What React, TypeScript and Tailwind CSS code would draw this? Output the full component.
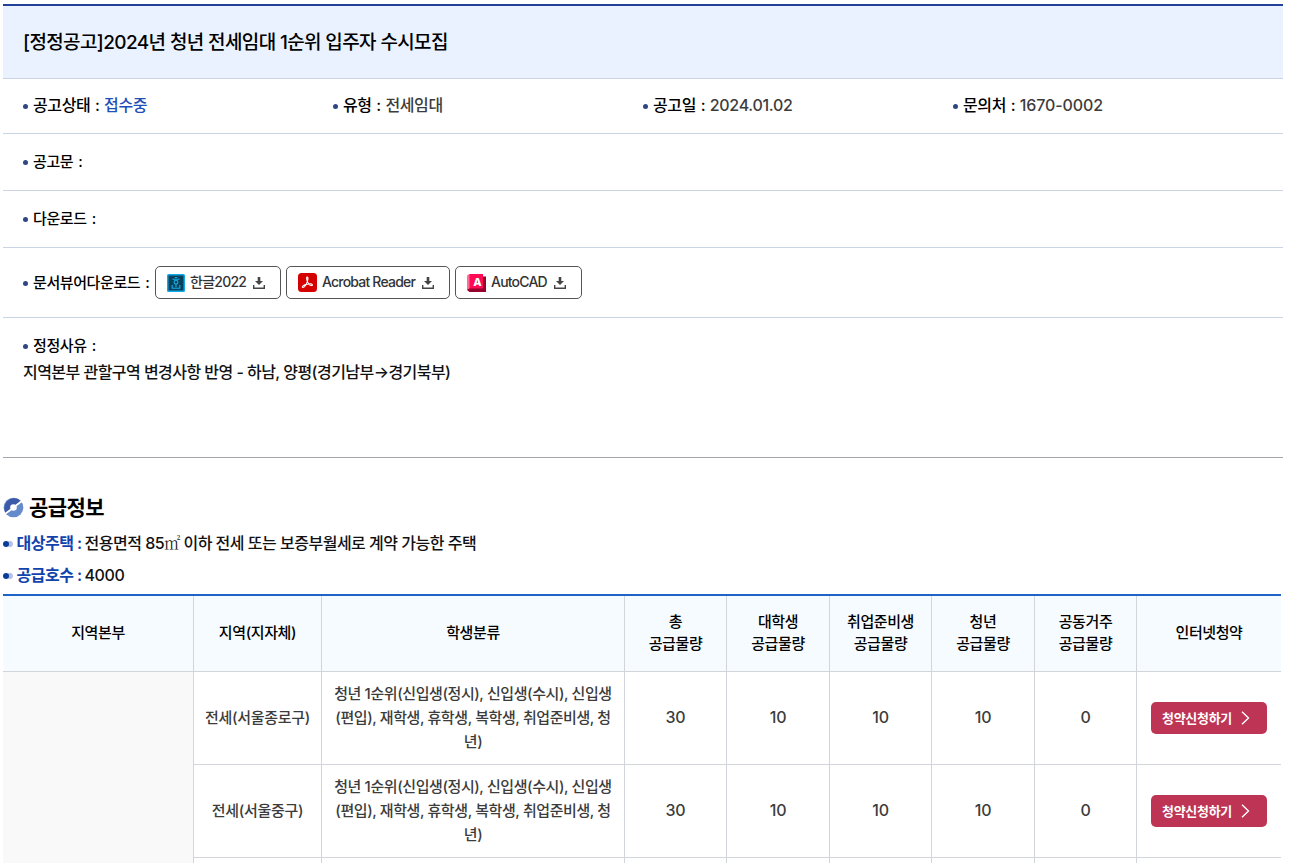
import type { ReactNode } from "react"

const regions = [
  { name: "전세(서울종로구)", counts: [30, 10, 10, 10, 0] },
  { name: "전세(서울중구)", counts: [30, 10, 10, 10, 0] },
]

const studentTypes = [
  "청년 1순위(신입생(정시), 신입생(수시), 신입생",
  "(편입), 재학생, 휴학생, 복학생, 취업준비생, 청",
  "년)",
]

const supplyHeads = ["총", "대학생", "취업준비생", "청년", "공동거주"]

const Label = ({ children, small }: { children: ReactNode; small?: boolean }) => (
  <span
    className={`flex items-center whitespace-pre font-medium tracking-[-0.4px] text-black ${
      small ? "text-[15px] leading-6 [word-spacing:1.5px]" : "[word-spacing:0.8px]"
    }`}
  >
    <i
      className={`mr-[5px] size-[5px] rounded-full bg-[#2f4684] ${small ? "mt-px" : "mt-[3px]"}`}
    />
    {children}
  </span>
)

const DownloadIcon = () => (
  <svg width="12" height="12" viewBox="0 0 12 12" className="ml-[7px]">
    <path d="M4.700 0h2.600v4h2.700L6 8 2 4h2.700z" fill="#444" />
    <path d="M.7 8v3.200h10.600V8" fill="none" stroke="#444" strokeWidth="1.400" />
  </svg>
)

const HangulIcon = () => (
  <svg width="18" height="18" viewBox="0 0 18 18">
    <rect width="18" height="18" rx="1.5" fill="#10a9ea" />
    <rect x="1.5" y="1.5" width="15" height="15" fill="#0b4259" />
    <g fill="none" stroke="#12b0ee" strokeWidth="1.1">
      <path d="M8 3.5h2M5.5 5.3h7M9 10.2v3M5.2 11v3.3h7.6V11" />
      <circle cx="9" cy="8.2" r="1.9" />
    </g>
  </svg>
)

const AcrobatIcon = () => (
  <svg width="19" height="19" viewBox="0 0 19 19">
    <rect width="19" height="19" rx="3.5" fill="#d50000" />
    <path
      d="M9.1 4c1.3 0 1 2.6.2 4.6-.9 2.3-2.7 5.9-4.2 5.9-1.8 0-.4-2.1 2.5-2.9 2.4-.7 6.2-1.1 6.8.1.4 1.1-1.8 1.3-3.4-.3C9.3 9.8 7.8 4 9.1 4z"
      fill="none"
      stroke="#fff"
      strokeWidth="1.1"
    />
  </svg>
)

const AutocadIcon = () => (
  <svg width="19" height="18" viewBox="0 0 19 18">
    <path d="M0 2l2.5-2H16v15l-2 1H0z" fill="#ff0a55" />
    <path d="M0 2l2.5-2v14.5L0 16z" fill="#ff6c98" />
    <path d="M16 2.5h3V18H2.5L0 16l2.5-1.5H16z" fill="#98002d" />
    <text
      x="10"
      y="11.5"
      textAnchor="middle"
      fontSize="11"
      fontWeight="800"
      fill="#fff"
      fontFamily="Inter, sans-serif"
    >
      A
    </text>
  </svg>
)

const ViewerButton = ({
  icon,
  label,
  className,
}: {
  icon: ReactNode
  label: string
  className: string
}) => (
  <button
    className={`flex h-[33px] items-center rounded-[5px] border border-[#555] pl-[11px] text-sm leading-5 font-medium text-[#333] ${className}`}
  >
    {icon}
    <span className="ml-[5px] pb-0.5 whitespace-nowrap">{label}</span>
    <DownloadIcon />
  </button>
)

const Bullets = () => (
  <svg width="10" height="6" viewBox="0 0 10 6" className="mt-0.5 mr-[3.5px]">
    <circle cx="7" cy="3" r="2.9" fill="#b5bfe6" />
    <circle cx="3" cy="3" r="3" fill="#0c3c9a" />
  </svg>
)

const ApplyButton = () => (
  <button className="mx-auto flex h-8 w-[116px] items-center rounded-[5px] bg-[#bd3454] pl-[11px] text-[13px] font-semibold tracking-[-0.3px] text-white">
    청약신청하기
    <svg
      width="9"
      height="14"
      viewBox="0 0 9 14"
      className="ml-[9px]"
      fill="none"
      stroke="#fff"
      strokeWidth="1.4"
    >
      <path d="M1 .8l6.5 6.2L1 13.2" />
    </svg>
  </button>
)

const th =
  "border-b border-[#d2d6da] bg-[#f6fbff] pb-px font-medium text-[15px] leading-[22px] tracking-[-0.4px] text-black"
const td = "border-b border-[#d2d6da]"

const App = () => {
  return (
    <div className="h-[863px] overflow-hidden bg-white pt-1 pl-[3px] font-[Inter,'Noto_Sans_CJK_KR',sans-serif] text-base leading-6 font-medium text-[#3c3c3c]">
      <section className="w-[1280px] border-t-2 border-[#22429a]">
        <h1 className="flex h-[73px] items-center border-b border-[#c9d4e5] bg-[#eaf2ff] pt-0.5 pl-5 text-[19px] font-medium tracking-[-0.62px] text-black">
          [정정공고]2024년 청년 전세임대 1순위 입주자 수시모집
        </h1>
        <ul className="flex h-[55px] items-center border-b border-[#c9d4e5] pb-0.5 pl-5">
          <li className="flex w-[310px]">
            <Label>공고상태 : </Label>
            <span className="tracking-[-0.4px] text-[#1e50b8]">접수중</span>
          </li>
          <li className="flex w-[310px]">
            <Label>유형 : </Label>
            <span className="tracking-[-0.4px]">전세임대</span>
          </li>
          <li className="flex w-[310px]">
            <Label>공고일 : </Label>
            <span className="tracking-[-0.3px]">2024.01.02</span>
          </li>
          <li className="flex">
            <Label>문의처 : </Label>
            <span className="tracking-[-0.1px]">1670-0002</span>
          </li>
        </ul>
        <div className="flex h-[57px] items-center border-b border-[#c9d4e5] pl-5">
          <Label small>공고문 :</Label>
        </div>
        <div className="flex h-[57px] items-center border-b border-[#c9d4e5] pl-5">
          <Label small>다운로드 :</Label>
        </div>
        <div className="flex h-[70px] items-center border-b border-[#c9d4e5] pl-5">
          <div className="w-[132px]">
            <Label small>문서뷰어다운로드 :</Label>
          </div>
          <div className="flex gap-[5px]">
            <ViewerButton icon={<HangulIcon />} label="한글2022" className="w-[126px] tracking-[-0.75px]" />
            <ViewerButton icon={<AcrobatIcon />} label="Acrobat Reader" className="w-[164px] tracking-[-0.8px]" />
            <ViewerButton icon={<AutocadIcon />} label="AutoCAD" className="w-[127px] tracking-[-0.8px]" />
          </div>
        </div>
        <div className="h-[140px] border-b border-[#a3a7ac] pt-4 pl-5">
          <Label small>정정사유 :</Label>
          <p className="mt-[2px] tracking-[-0.54px] text-[#111]">
            지역본부 관할구역 변경사항 반영 - 하남, 양평(경기남부→경기북부)
          </p>
        </div>
      </section>

      <section className="w-[1278px] pt-[33px]">
        <h2 className="flex h-8 items-center text-[21px] font-semibold tracking-[-0.6px] text-black">
          <svg width="21" height="21" viewBox="0 0 21 21" className="mr-[5px]">
            <circle cx="10.5" cy="10.5" r="9.8" fill="#668bcb" />
            <path d="M3.6 17.4A9.8 9.8 0 0 1 17.4 3.6z" fill="#3c5aa9" />
            <path d="M2 17L8 12.5M13 8.5L19 4" stroke="#fff" strokeWidth="1.8" />
            <circle cx="10.5" cy="10.5" r="3.3" fill="#fff" />
          </svg>
          <span className="pt-0.5">공급정보</span>
        </h2>
        <p className="mt-1 flex h-8 items-center tracking-[-0.5px] text-[#111]">
          <Bullets />
          <b className="mr-[3px] font-semibold text-[#1243ad]">대상주택 :</b>
          <span>
            전용면적 85
            <span className="font-['Noto_Serif_CJK_KR','Noto_Sans_CJK_KR',serif] font-light">㎡</span>{" "}
            이하 전세 또는 보증부월세로 계약 가능한 주택
          </span>
        </p>
        <p className="flex h-8 items-center tracking-[-0.4px] text-[#111]">
          <Bullets />
          <b className="mr-[3px] font-semibold tracking-[-0.5px] text-[#1243ad]">공급호수 :</b>
          4000
        </p>
        <table className="mt-[3px] w-[1278px] table-fixed border-separate border-spacing-0 border-t-2 border-[#1d63c8] text-center">
          <colgroup>
            <col className="w-[191px]" />
            <col className="w-[128px]" />
            <col className="w-[303px]" />
            <col className="w-[102px]" />
            <col className="w-[103px]" />
            <col className="w-[102px]" />
            <col className="w-[103px]" />
            <col className="w-[102px]" />
            <col className="w-[144px]" />
          </colgroup>
          <thead>
            <tr className="h-[76px]">
              <th className={`${th} border-r`}>지역본부</th>
              <th className={`${th} border-r`}>지역(지자체)</th>
              <th className={`${th} border-r`}>학생분류</th>
              {supplyHeads.map((head) => (
                <th key={head} className={`${th} border-r`}>
                  {head}
                  <br />
                  공급물량
                </th>
              ))}
              <th className={th}>인터넷청약</th>
            </tr>
          </thead>
          <tbody>
            {regions.map((region, i) => (
              <tr key={region.name} className="h-[93px]">
                {i === 0 && (
                  <td rowSpan={regions.length + 1} className="border-r border-[#d2d6da] bg-[#f9f9f9]" />
                )}
                <td className={`${td} border-r pb-px text-[15px] tracking-[-0.3px]`}>
                  {region.name}
                </td>
                <td className={`${td} border-r pb-px text-[15px] whitespace-nowrap tracking-[-0.42px]`}>
                  {studentTypes.map((line) => (
                    <div key={line}>{line}</div>
                  ))}
                </td>
                {region.counts.map((count, n) => (
                  <td key={n} className={`${td} border-r pb-[3px] tracking-[-0.3px]`}>
                    {count}
                  </td>
                ))}
                <td className={td}>
                  <ApplyButton />
                </td>
              </tr>
            ))}
            <tr className="h-[93px]">
              {Array.from({ length: 7 }, (_, n) => (
                <td key={n} className={`${td} border-r`} />
              ))}
              <td className={td} />
            </tr>
          </tbody>
        </table>
      </section>
    </div>
  )
}

export default App
